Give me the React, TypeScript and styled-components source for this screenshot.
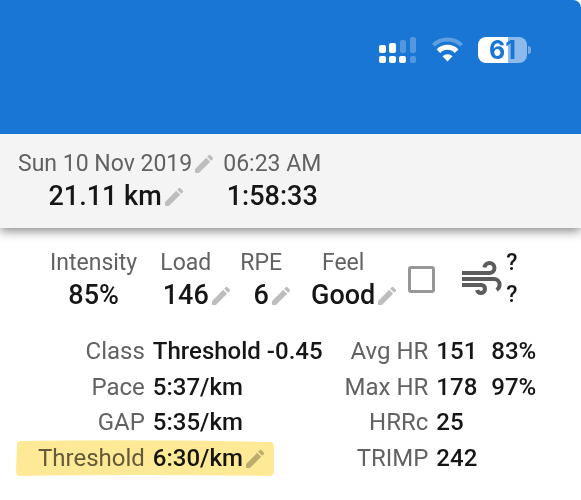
import React from "react";
import styled, { createGlobalStyle } from "styled-components";

const GlobalStyle = createGlobalStyle`
  *, *::before, *::after { box-sizing: border-box; }
  body {
    margin: 0;
    background: #fff;
    color: #161616;
    font-family: Roboto, "Liberation Sans", sans-serif;
    overflow-x: hidden;
  }
`;

const Page = styled.main`
  min-height: 100vh;
`;

const StatusBar = styled.header`
  display: flex;
  justify-content: flex-end;
  align-items: flex-start;
  gap: 15px;
  padding: 37px 50px 0 0;
  height: 134px;
  background: #1976d4;
  border-top-right-radius: 8px;
`;

const Battery = styled.div`
  display: flex;
  align-items: center;
  gap: 1px;
`;

const BatteryCell = styled.span<{ $level: number }>`
  width: 49px;
  border-radius: 8px;
  background: linear-gradient(to right, #fff ${(p) => p.$level}%, #8cbaea ${(p) => p.$level}%);
  color: #1976d4;
  font: 700 25px/26px Inter, sans-serif;
  text-align: center;
`;

const BatteryTip = styled.span`
  width: 3px;
  height: 8px;
  border-radius: 0 3px 3px 0;
  background: #75ace5;
`;

const Summary = styled.section`
  position: relative;
  display: flex;
  gap: 31px;
  padding: 13px 18px 15px;
  background: #f4f4f4;
  box-shadow: 0 3px 10px rgba(0, 0, 0, 0.48);
  clip-path: inset(0 0 -20px 0);
`;

const StatBox = styled.div<{ $editable?: boolean }>`
  display: flex;
  flex-direction: column;
  align-items: center;
  margin-right: ${(p) => (p.$editable ? 6 : 0)}px;
  line-height: 33px;
  white-space: nowrap;

  ${Summary} & {
    margin-right: 0;
  }
`;

const Label = styled.span`
  display: flex;
  align-items: center;
  color: #626262;
  font-size: 23px;
`;

const Value = styled.span`
  display: flex;
  align-items: center;
  font-size: 27px;
  font-weight: 500;
`;

const EditButton = styled.button`
  display: inline-flex;
  margin: 0 -24px 0 0;
  padding: 0;
  border: 0;
  background: none;
  color: #bdbdbd;
  vertical-align: middle;
  cursor: pointer;
`;

const Metrics = styled.section`
  display: flex;
  gap: 23px;
  padding: 18px 17px 0 50px;
`;

const Flags = styled.div`
  display: flex;
  align-items: center;
  gap: 26px;
  margin-left: 4px;
`;

const CheckBox = styled.input`
  appearance: none;
  width: 27px;
  height: 27px;
  margin: 0;
  border: 3px solid #979797;
  border-radius: 3px;
  background: #fff;
`;

const Wind = styled.div`
  display: flex;
  align-items: center;
  gap: 3px;
`;

const WindReadings = styled.div`
  display: flex;
  flex-direction: column;
  font-size: 23px;
  font-weight: 500;
  line-height: 32px;
`;

const Details = styled.section`
  display: flex;
  gap: 22px;
  padding: 22px 17px 0 16px;
`;

const DetailTable = styled.table`
  height: 142px;
  border-collapse: collapse;
  font-size: 24px;
  line-height: 35px;
  white-space: nowrap;

  th {
    position: relative;
    padding: 0 8px 0 0;
    color: #626262;
    font-weight: 400;
    text-align: right;
  }

  td {
    padding: 0;
    font-weight: 500;
  }

  td + td {
    padding-left: 14px;
  }
`;

const WideHeading = styled.th`
  && {
    padding-left: 22px;
  }
`;

const Marker = styled.svg`
  position: absolute;
  top: -1px;
  left: 0;
  mix-blend-mode: multiply;
  pointer-events: none;
`;

const Pencil = ({ label }: { label: string }) => (
  <EditButton type="button" aria-label={label}>
    <svg width="24" height="24" viewBox="0 0 24 24" fill="currentColor">
      <path d="M3.400 16.700Q3 17.100 3 17.800V20q0 1 1 1h2.400q.6 0 1-.4L18.200 9.800l-4-4zM20.700 7.300q.9-.9 0-1.800l-2.200-2.200q-.9-.9-1.800 0l-1.500 1.500 4 4z" />
    </svg>
  </EditButton>
);

const Stat = ({ label, value, editLabel, editValue }: { label: string; value: string; editLabel?: boolean; editValue?: boolean }) => (
  <StatBox $editable={editValue}>
    <Label>
      {label}
      {editLabel && <Pencil label="Edit date" />}
    </Label>
    <Value>
      {value}
      {editValue && <Pencil label={`Edit ${label}`} />}
    </Value>
  </StatBox>
);

const pace = [
  ["Class", "Threshold -0.45"],
  ["Pace", "5:37/km"],
  ["GAP", "5:35/km"],
  ["Threshold", "6:30/km"],
];

const heart = [
  ["Avg HR", "151", "83%"],
  ["Max HR", "178", "97%"],
  ["HRRc", "25", ""],
  ["TRIMP", "242", ""],
];

export default function App() {
  return (
    <Page>
      <GlobalStyle />
      <StatusBar>
        <svg width="38" height="26" viewBox="0 0 38 26" fill="#fff" aria-label="Signal">
          <rect x="0" y="8" width="7" height="8" rx="2" />
          <rect x="10" y="6" width="7" height="10" rx="2" />
          <rect x="21" y="3" width="6" height="13" rx="2" opacity=".25" />
          <rect x="31" y="0" width="6" height="16" rx="2" opacity=".25" />
          <rect x="0" y="19" width="7" height="7" rx="2" />
          <rect x="10" y="19" width="7" height="7" rx="2" />
          <rect x="20" y="19" width="7" height="7" rx="2" />
          <rect x="31" y="19" width="6" height="7" rx="2" opacity=".25" />
        </svg>
        <svg width="31" height="26" viewBox="0 0 31 26" fill="none" stroke="#fff" strokeWidth="4" aria-label="Wi-Fi">
          <path d="M1.400 8.200a20 20 0 0 1 28.200 0" opacity=".3" />
          <path d="M6.400 14.200a12.600 12.600 0 0 1 18.200 0" strokeWidth="5" />
          <path d="M15.500 24.500l-5-5.200a7.200 7.200 0 0 1 10 0z" fill="#fff" stroke="none" />
        </svg>
        <Battery>
          <BatteryCell $level={61}>61</BatteryCell>
          <BatteryTip />
        </Battery>
      </StatusBar>
      <Summary>
        <Stat label="Sun 10 Nov 2019" value="21.11 km" editLabel editValue />
        <Stat label="06:23 AM" value="1:58:33" />
      </Summary>
      <Metrics>
        <Stat label="Intensity" value="85%" />
        <Stat label="Load" value="146" editValue />
        <Stat label="RPE" value="6" editValue />
        <Stat label="Feel" value="Good" editValue />
        <Flags>
          <CheckBox type="checkbox" aria-label="Select activity" />
          <Wind>
            <svg width="42" height="36" viewBox="0 0 42 36" fill="none" stroke="#5c5c5c" strokeWidth="4" aria-label="Wind">
              <path d="M1 12H28.500a5 5 0 1 0-5-5.600" />
              <path d="M1 18H33a5.600 5.600 0 0 1 5.600 5.600q0 3.400-3 5.300" />
              <path d="M1 24H20.500a4 4 0 1 1-4.400 5" />
            </svg>
            <WindReadings>
              <span>?</span>
              <span>?</span>
            </WindReadings>
          </Wind>
        </Flags>
      </Metrics>
      <Details>
        <DetailTable>
          <tbody>
            {pace.map(([name, value]) => (
              <tr key={name}>
                <WideHeading scope="row">
                  {name}
                  {name === "Threshold" && (
                    <Marker width="260" height="38" viewBox="0 0 260 38" fill="#fee996">
                      <path d="M4 1Q120-1 254 2q4 0 4 5v24q0 5-5 5Q120 34 4 36q-4 0-4-5L1 5q0-4 3-4z" />
                    </Marker>
                  )}
                </WideHeading>
                <td>
                  {value}
                  {name === "Threshold" && <Pencil label="Edit threshold" />}
                </td>
              </tr>
            ))}
          </tbody>
        </DetailTable>
        <DetailTable>
          <tbody>
            {heart.map(([name, value, share]) => (
              <tr key={name}>
                <th scope="row">{name}</th>
                <td>{value}</td>
                <td>{share}</td>
              </tr>
            ))}
          </tbody>
        </DetailTable>
      </Details>
    </Page>
  );
}
